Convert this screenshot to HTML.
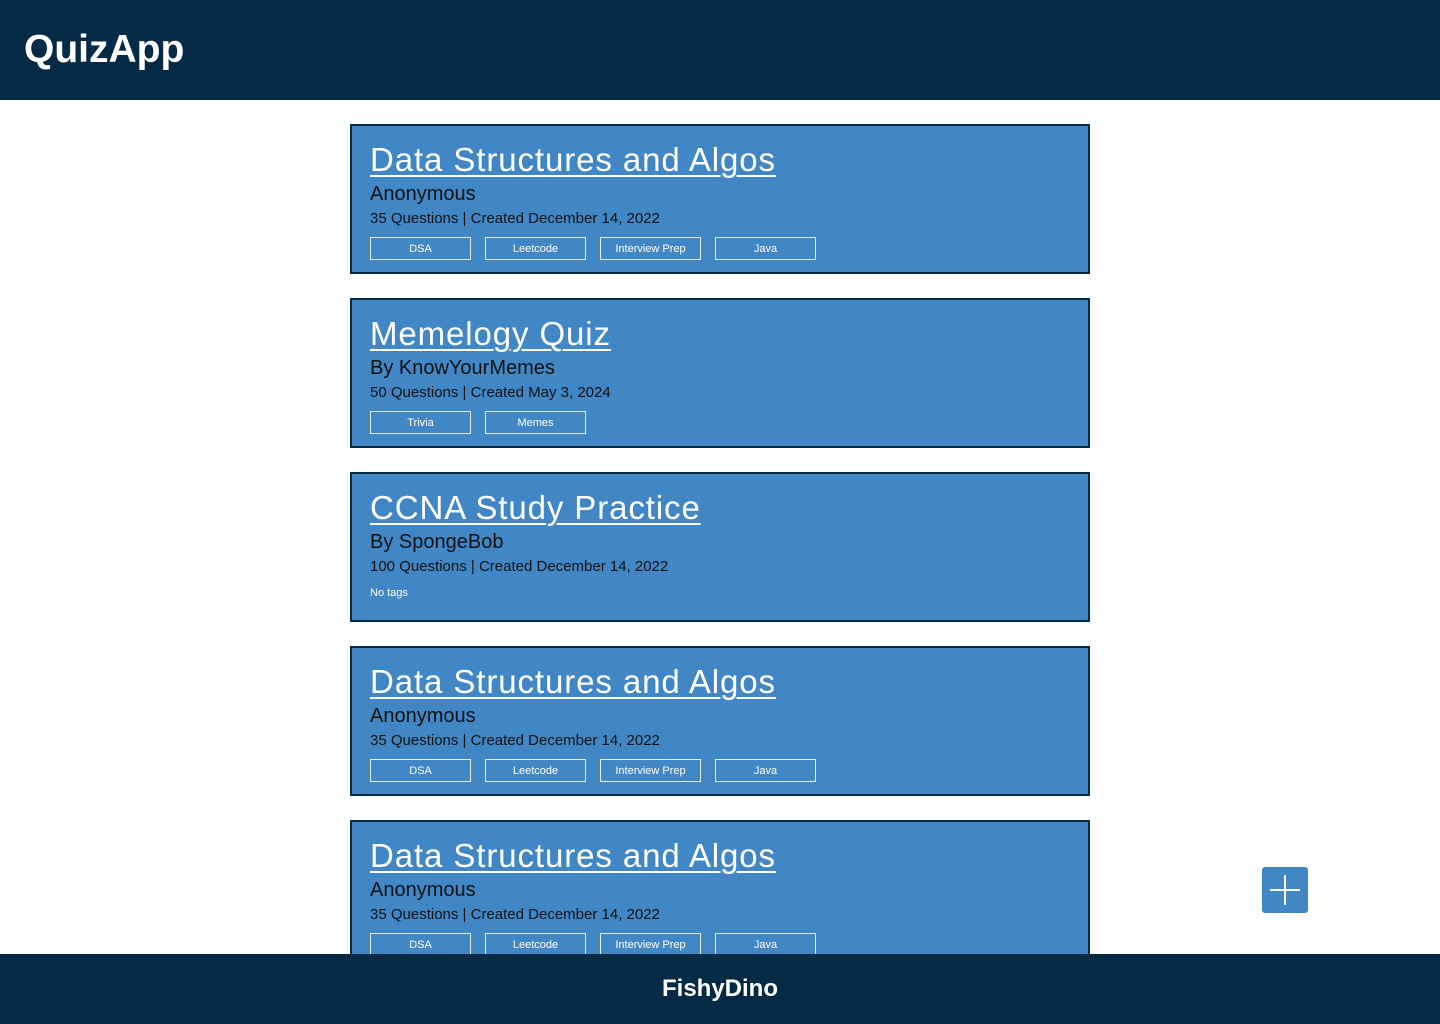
<!DOCTYPE html>
<html><head><meta charset="utf-8"><style>
*{margin:0;padding:0;box-sizing:border-box}
body{width:1440px;height:1024px;overflow:hidden;background:#fff;font-family:"Liberation Sans",sans-serif;position:relative}
.hdr{position:absolute;left:0;top:0;width:1440px;height:100px;background:#042a45}
.hdr h1{position:absolute;left:24px;top:28px;color:#fff;font-size:39px;font-weight:bold;line-height:44px}
.card{position:absolute;left:350px;width:740px;height:150px;background:#4287c5;border:2px solid #062b45}
.t{position:absolute;left:18px;top:14px;color:#fff;font-size:33px;line-height:40px;text-decoration:underline;text-decoration-thickness:2px;text-underline-offset:4px;letter-spacing:0.9px;white-space:nowrap}
.a{position:absolute;left:18px;top:56px;font-size:20px;color:#111;line-height:24px}
.m{position:absolute;left:18px;top:84px;font-size:15px;color:#111;line-height:18px}
.tags{position:absolute;left:18px;top:111px;display:flex;gap:14px}
.tag{width:101px;height:23px;border:1.5px solid #e6eef7;color:#fff;font-size:11px;text-align:center;line-height:23px}
.nt{position:absolute;left:18px;top:113px;font-size:11px;color:#fff}
.ftr{position:absolute;left:0;top:954px;width:1440px;height:70px;background:#042a45;color:#fff;text-align:center;font-size:24px;font-weight:bold;line-height:70px}
.plus{position:absolute;left:1262px;top:867px;width:46px;height:46px;background:#4287c5;border-radius:3px}
.plus:before{content:"";position:absolute;left:8px;top:22px;width:30px;height:2px;background:#fff}
.plus:after{content:"";position:absolute;left:22px;top:8px;width:2px;height:30px;background:#fff}
</style></head><body>
<div class="hdr"><h1>QuizApp</h1></div>

<div class="card" style="top:124px"><div class="t">Data Structures and Algos</div><div class="a">Anonymous</div><div class="m">35 Questions | Created December 14, 2022</div><div class="tags"><div class="tag">DSA</div><div class="tag">Leetcode</div><div class="tag">Interview Prep</div><div class="tag">Java</div></div></div>

<div class="card" style="top:298px"><div class="t">Memelogy Quiz</div><div class="a">By KnowYourMemes</div><div class="m">50 Questions | Created May 3, 2024</div><div class="tags"><div class="tag">Trivia</div><div class="tag">Memes</div></div></div>

<div class="card" style="top:472px"><div class="t">CCNA Study Practice</div><div class="a">By SpongeBob</div><div class="m">100 Questions | Created December 14, 2022</div><div class="nt">No tags</div></div>

<div class="card" style="top:646px"><div class="t">Data Structures and Algos</div><div class="a">Anonymous</div><div class="m">35 Questions | Created December 14, 2022</div><div class="tags"><div class="tag">DSA</div><div class="tag">Leetcode</div><div class="tag">Interview Prep</div><div class="tag">Java</div></div></div>

<div class="card" style="top:820px"><div class="t">Data Structures and Algos</div><div class="a">Anonymous</div><div class="m">35 Questions | Created December 14, 2022</div><div class="tags"><div class="tag">DSA</div><div class="tag">Leetcode</div><div class="tag">Interview Prep</div><div class="tag">Java</div></div></div>

<div class="plus"></div>
<div class="ftr">FishyDino</div>
</body></html>
